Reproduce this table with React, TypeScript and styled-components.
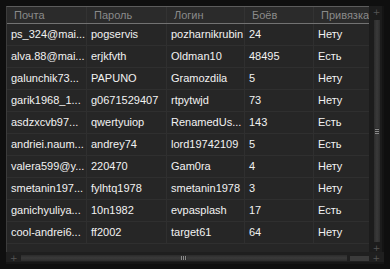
import React from 'react';
import styled, { createGlobalStyle } from 'styled-components';

const GlobalStyle = createGlobalStyle`
  html, body {
    margin: 0;
    padding: 0;
    background: #0f0f0f;
  }
  body {
    font-family: "Liberation Sans", Arial, sans-serif;
  }
`;

type Account = {
  mail: string;
  password: string;
  login: string;
  battles: string;
  bound: string;
};

const accounts: Account[] = [
  { mail: 'ps_324@mai...', password: 'pogservis', login: 'pozharnikrubin', battles: '24', bound: 'Нету' },
  { mail: 'alva.88@mai...', password: 'erjkfvth', login: 'Oldman10', battles: '48495', bound: 'Есть' },
  { mail: 'galunchik73...', password: 'PAPUNO', login: 'Gramozdila', battles: '5', bound: 'Нету' },
  { mail: 'garik1968_1...', password: 'g0671529407', login: 'rtpytwjd', battles: '73', bound: 'Нету' },
  { mail: 'asdzxcvb97...', password: 'qwertyuiop', login: 'RenamedUs...', battles: '143', bound: 'Есть' },
  { mail: 'andriei.naum...', password: 'andrey74', login: 'lord19742109', battles: '5', bound: 'Есть' },
  { mail: 'valera599@y...', password: '220470', login: 'Gam0ra', battles: '4', bound: 'Нету' },
  { mail: 'smetanin197...', password: 'fylhtq1978', login: 'smetanin1978', battles: '3', bound: 'Нету' },
  { mail: 'ganichyuliya...', password: '10n1982', login: 'evpasplash', battles: '17', bound: 'Есть' },
  { mail: 'cool-andrei6...', password: 'ff2002', login: 'target61', battles: '64', bound: 'Нету' }
];

const columns = ['Почта', 'Пароль', 'Логин', 'Боёв', 'Привязка'];
const COLS = '80px 80px 78px 69px 56px';

const Panel = styled.div`
  margin: 6px 0 0 6px;
  width: 378px;
  height: 258px;
  display: grid;
  grid-template-columns: 363px 15px;
  grid-template-rows: 1fr 12px;
  background: #262626;
  box-shadow: inset 1px 0 0 #3a3a3a;
`;

const TableArea = styled.div`
  display: flex;
  flex-direction: column;
  overflow: hidden;
  border-top: 1px solid #5c5c5c;
  border-left: 1px solid #3c3c3c;
`;

const HeaderRow = styled.div`
  display: grid;
  grid-template-columns: ${COLS};
  height: 16px;
  background: #2b2b2b;
  border-bottom: 1px solid #727272;
`;

const HeaderCell = styled.div`
  padding-left: 7px;
  font-size: 11px;
  line-height: 16px;
  color: #8a8a8a;
  white-space: nowrap;
  overflow: hidden;
  border-right: 1px solid #333;
  &:last-child {
    border-right: none;
  }
`;

const Row = styled.div`
  display: grid;
  grid-template-columns: ${COLS};
  height: 22px;
  border-bottom: 1px solid #2f2f2f;
  box-sizing: border-box;
`;

const Cell = styled.div`
  padding-left: 4px;
  font-size: 11px;
  line-height: 21px;
  color: #f2f2f2;
  white-space: nowrap;
  overflow: hidden;
  border-right: 1px solid #2f2f2f;
`;

const VScroll = styled.div`
  background: #1c1c1c;
  display: flex;
  flex-direction: column;
  align-items: center;
  padding-top: 2px;
  box-shadow: inset -2px 0 0 #141414;
`;

const Plus = styled.span`
  font-size: 9px;
  line-height: 8px;
  color: #555;
  font-family: "DejaVu Sans", sans-serif;
`;

const VThumb = styled.div`
  flex: 1;
  width: 6px;
  margin: 4px 0 2px;
  background: linear-gradient(90deg, #2c2c2c, #3a3a3a 50%, #2c2c2c);
  display: flex;
  align-items: center;
  justify-content: center;
`;

const Grip = styled.div<{ $vertical?: boolean }>`
  width: ${(p) => (p.$vertical ? '4px' : '6px')};
  height: ${(p) => (p.$vertical ? '6px' : '4px')};
  background: ${(p) =>
    p.$vertical
      ? 'repeating-linear-gradient(0deg, #8a8a8a 0 1px, #2c2c2c 1px 2px)'
      : 'repeating-linear-gradient(90deg, #8a8a8a 0 1px, #2c2c2c 1px 2px)'};
`;

const HScroll = styled.div`
  grid-column: 1 / span 2;
  background: #1f1f1f;
  display: flex;
  align-items: center;
  padding: 0 4px 0 4px;
  gap: 3px;
  box-shadow: inset 0 -2px 0 #161616;
`;

const HThumb = styled.div`
  flex: 1;
  height: 6px;
  background: linear-gradient(180deg, #2c2c2c, #3a3a3a 50%, #2c2c2c);
  display: flex;
  align-items: center;
  justify-content: center;
`;

const HTrack = styled.div`
  width: 19px;
  height: 5px;
  background: #3b3b3b;
`;

export default function App() {
  return (
    <>
      <GlobalStyle />
      <Panel>
        <TableArea>
          <HeaderRow>
            {columns.map((c) => (
              <HeaderCell key={c}>{c}</HeaderCell>
            ))}
          </HeaderRow>
          {accounts.map((a) => (
            <Row key={a.mail}>
              <Cell>{a.mail}</Cell>
              <Cell>{a.password}</Cell>
              <Cell>{a.login}</Cell>
              <Cell>{a.battles}</Cell>
              <Cell>{a.bound}</Cell>
            </Row>
          ))}
        </TableArea>
        <VScroll>
          <Plus>+</Plus>
          <VThumb>
            <Grip $vertical />
          </VThumb>
          <Plus>+</Plus>
        </VScroll>
        <HScroll>
          <Plus>+</Plus>
          <HThumb>
            <Grip />
          </HThumb>
          <HTrack />
          <Plus>+</Plus>
        </HScroll>
      </Panel>
    </>
  );
}
